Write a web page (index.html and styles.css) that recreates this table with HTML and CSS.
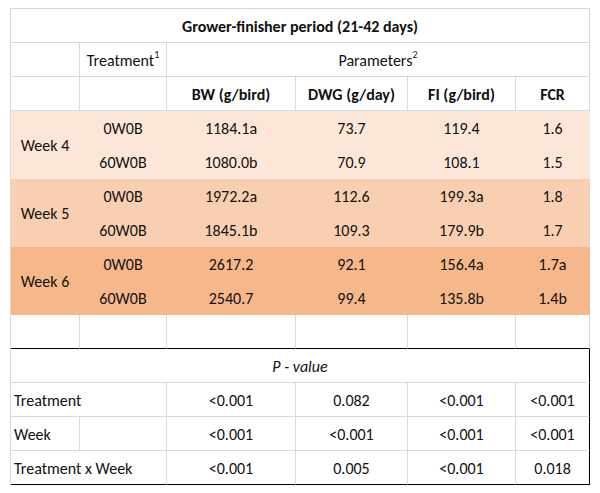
FILE: index.html
```html
<!DOCTYPE html>
<html lang="en">
<head>
<meta charset="utf-8">
<title>Grower-finisher period</title>
<link rel="stylesheet" href="styles.css">
</head>
<body>
<table class="sheet">
  <colgroup>
    <col class="c1"><col class="c2"><col class="c3"><col class="c4"><col class="c5"><col class="c6">
  </colgroup>
  <tbody>
    <tr><td colspan="6" class="bold">Grower-finisher period (21-42 days)</td></tr>
    <tr><td></td><td>Treatment<sup>1</sup></td><td colspan="4">Parameters<sup>2</sup></td></tr>
    <tr><td></td><td></td><td class="bold">BW (g/bird)</td><td class="bold">DWG (g/day)</td><td class="bold">FI (g/bird)</td><td class="bold">FCR</td></tr>

    <tr class="band w4"><td rowspan="2">Week 4</td><td>0W0B</td><td>1184.1a</td><td>73.7</td><td>119.4</td><td>1.6</td></tr>
    <tr class="band w4"><td>60W0B</td><td>1080.0b</td><td>70.9</td><td>108.1</td><td>1.5</td></tr>
    <tr class="band w5"><td rowspan="2">Week 5</td><td>0W0B</td><td>1972.2a</td><td>112.6</td><td>199.3a</td><td>1.8</td></tr>
    <tr class="band w5"><td>60W0B</td><td>1845.1b</td><td>109.3</td><td>179.9b</td><td>1.7</td></tr>
    <tr class="band w6"><td rowspan="2">Week 6</td><td>0W0B</td><td>2617.2</td><td>92.1</td><td>156.4a</td><td>1.7a</td></tr>
    <tr class="band w6"><td>60W0B</td><td>2540.7</td><td>99.4</td><td>135.8b</td><td>1.4b</td></tr>

    <tr class="spacer"><td></td><td></td><td></td><td></td><td></td><td></td></tr>
    <tr class="pv"><td colspan="6" class="pvhead"><i>P - value</i></td></tr>
    <tr class="pv"><td colspan="2" class="lbl">Treatment</td><td>&lt;0.001</td><td>0.082</td><td>&lt;0.001</td><td>&lt;0.001</td></tr>
    <tr class="pv"><td class="lbl">Week</td><td></td><td>&lt;0.001</td><td>&lt;0.001</td><td>&lt;0.001</td><td>&lt;0.001</td></tr>
    <tr class="pv last"><td colspan="2" class="lbl">Treatment x Week</td><td>&lt;0.001</td><td>0.005</td><td>&lt;0.001</td><td>0.018</td></tr>
  </tbody>
</table>
</body>
</html>
```
FILE: styles.css
```css
html, body {
  background: #ffffff;
}
body {
  margin: 8px 0 0 10px;
  font-family: Carlito, Lato, "Liberation Sans", sans-serif;
  font-size: 16px;
  color: #111111;
}
.sheet {
  border-collapse: separate;
  border-spacing: 0;
  table-layout: fixed;
  width: 580px;
  border-left: 1px solid #dadada;
  border-top: 1px solid #dadada;
}
.c1 { width: 69px; }
.c2 { width: 87px; }
.c3 { width: 129px; }
.c4 { width: 112px; }
.c5 { width: 108px; }
.c6 { width: 74px; }
.sheet td {
  box-sizing: border-box;
  height: 34px;
  padding: 3px 0 0 0;
  text-align: center;
  vertical-align: middle;
  border-right: 1px solid #dadada;
  border-bottom: 1px solid #dadada;
  white-space: nowrap;
  line-height: 18px;
}
.sheet .bold { font-weight: bold; }
.sheet sup {
  font-size: 10px;
  line-height: 0;
  vertical-align: 8px;
}
.band td {
  border-right-color: transparent;
  border-bottom-color: transparent;
}
.w4 td { background: #fce6d8; }
.w5 td { background: #f9cfb1; }
.w6 td { background: #f6b88a; }
.spacer td { border-bottom-color: #000000; }
.pv td:last-child { border-right-color: #000000; }
.pv.last td { border-bottom-color: #000000; }
.sheet .lbl {
  text-align: left;
  padding-left: 3px;
}
.pvhead i { font-style: italic; }
```
